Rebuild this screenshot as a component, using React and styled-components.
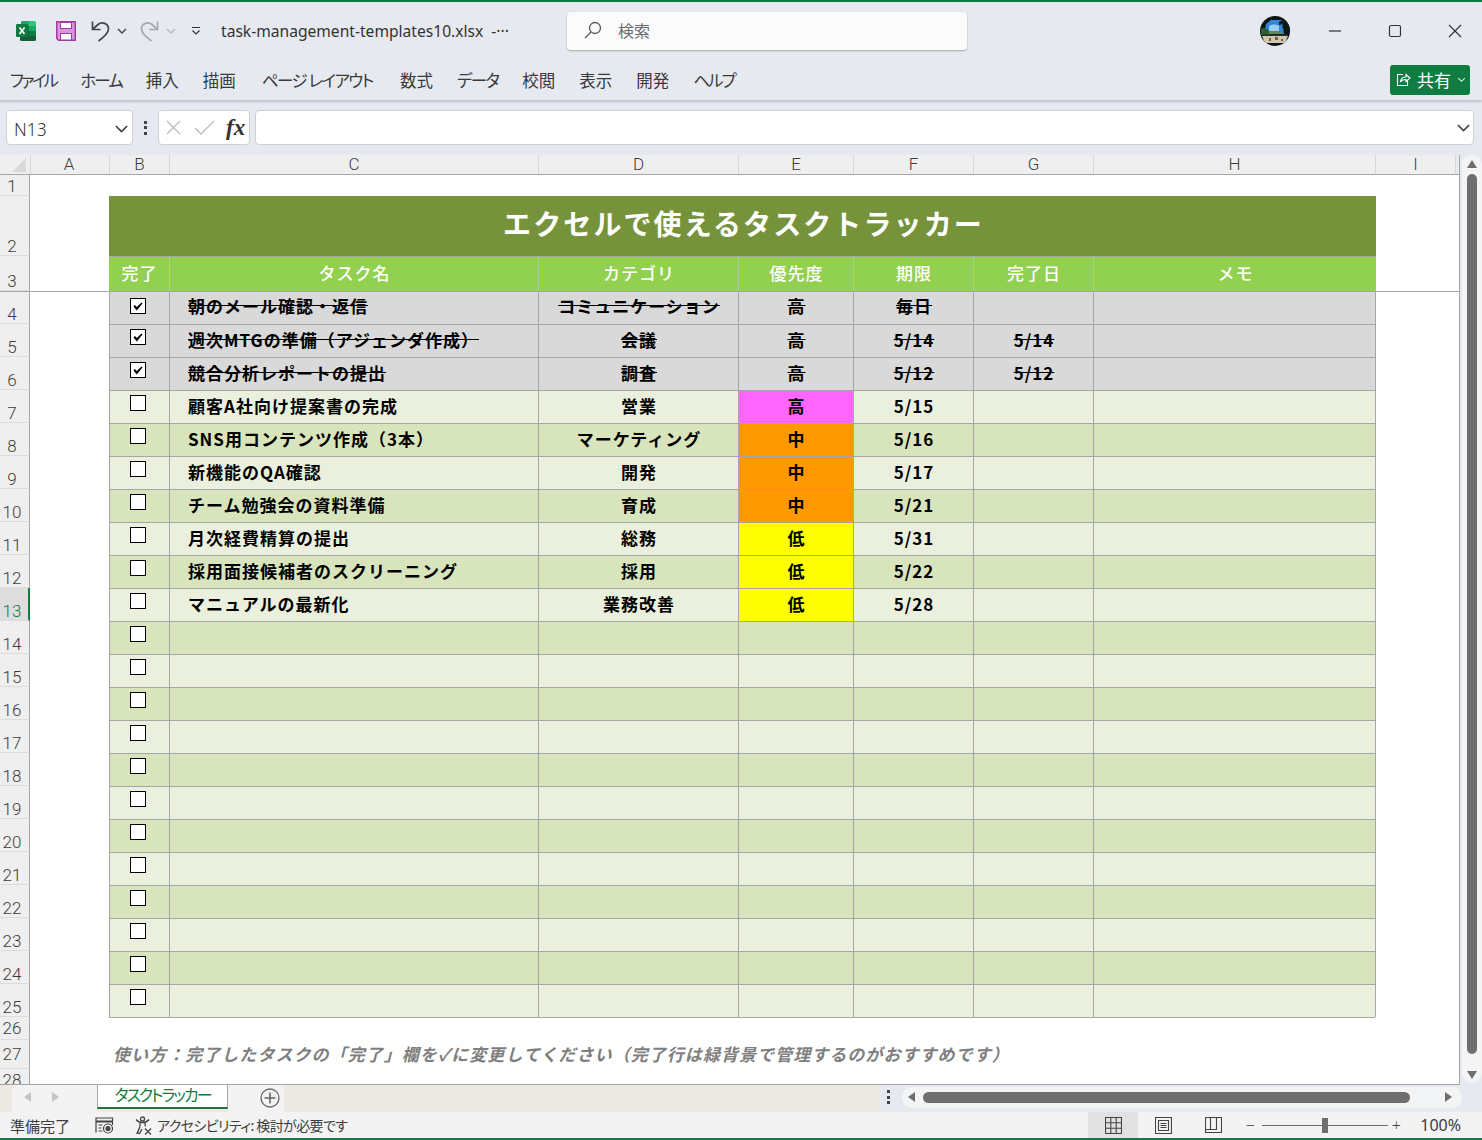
import React from 'react'
import styled, { createGlobalStyle } from 'styled-components'

const jp = `"Noto Sans CJK JP", "Noto Sans", sans-serif`
const ui = `"Noto Sans", "Noto Sans CJK JP", sans-serif`
const chrome = '#e6e9ef'
const line = '#a6a6a6'
const columns = '30px 79px 60px 369px 200px 115px 120px 120px 282px 85px'

const Global = createGlobalStyle`
    html, body {
        margin: 0;
        padding: 0;
        overflow: hidden;
    }
    * {
        box-sizing: border-box;
    }
`

const Page = styled.div`
    width: 1482px;
    height: 1140px;
    display: flex;
    flex-direction: column;
    overflow: hidden;
    background: ${chrome};
    font-family: ${jp};
    color: #333;
`

const TitleBar = styled.div`
    height: 62px;
    flex: none;
    border-top: 2px solid #107c41;
    display: flex;
    align-items: center;
    padding: 0 20px 2px 16px;
`

const QuickIcon = styled.svg`
    flex: none;
    display: block;
    margin-left: ${p => p.$gap || 0}px;
`

const FileName = styled.div`
    margin-left: 20px;
    width: 346px;
    flex: none;
    font-family: ${ui};
    font-size: 15.6px;
    color: #333;
    white-space: nowrap;
`

const SearchBox = styled.div`
    width: 400px;
    height: 38px;
    flex: none;
    background: #fbfbfb;
    border-radius: 4px;
    box-shadow: 0 1px 2px rgba(0, 0, 0, .28);
    display: flex;
    align-items: center;
    gap: 16px;
    padding: 0 0 2px 17px;
    font-size: 16px;
    color: #6b6b6b;
`

const Avatar = styled.svg`
    margin-left: auto;
    margin-right: 38px;
    border-radius: 50%;
    display: block;
    flex: none;
`

const WindowButtons = styled.div`
    display: flex;
    align-items: center;
    gap: 46px;
`

const RibbonTabs = styled.div`
    height: 38px;
    flex: none;
    display: flex;
    align-items: center;
    padding: 0 12px 2px 10px;
    gap: 24px;
    font-size: 16.5px;
    font-feature-settings: "palt";
    box-shadow: 0 2px 2px rgba(0, 0, 0, .16);
    position: relative;
    z-index: 1;
`

const RibbonTab = styled.span`
    white-space: pre;
    color: #3a3a3a;
    line-height: 1;
    letter-spacing: ${p => p.$squeeze || 0}px;
    margin: 0 ${p => p.$after || 0}px 0 ${p => p.$before || 0}px;
`

const ShareButton = styled.div`
    margin-left: auto;
    width: 80px;
    height: 30px;
    margin-top: -1px;
    background: #107c41;
    border-radius: 3px;
    color: #fff;
    display: flex;
    align-items: center;
    gap: 6px;
    padding: 0 0 1px 6px;
    font-size: 17px;
`

const FormulaBar = styled.div`
    height: 55px;
    flex: none;
    display: flex;
    align-items: center;
    padding: 0 8px 0 6px;
`

const FieldBox = styled.div`
    height: 35px;
    background: #fff;
    border: 1px solid #cfcfcf;
    border-radius: 4px;
    display: flex;
    align-items: center;
`

const NameBox = styled(FieldBox)`
    width: 127px;
    justify-content: space-between;
    padding: 2px 3px 0 7px;
    font-family: ${ui};
    font-weight: 300;
    font-size: 17.5px;
    color: #333;
`

const Dots = styled.div`
    width: 25px;
    display: flex;
    flex-direction: column;
    align-items: center;
    gap: 2.5px;

    i {
        width: 3px;
        height: 3px;
        background: #444;
    }
`

const FxBox = styled(FieldBox)`
    width: 92px;
    padding-left: 7px;
    gap: 13px;
`

const FxLabel = styled.span`
    font-family: "Liberation Serif", serif;
    font-style: italic;
    font-weight: 700;
    font-size: 23px;
    color: #333;
    margin-left: -2px;
`

const FormulaInput = styled(FieldBox)`
    flex: 1;
    margin-left: 5px;
    justify-content: flex-end;
    padding-right: 2px;
`

const Sheet = styled.div`
    height: 930px;
    flex: none;
    display: flex;
`

const SheetMain = styled.div`
    width: 1460px;
    flex: none;
    overflow: hidden;
    border-right: 1px solid ${line};
    border-bottom: 1px solid ${line};
    background: #fff;
`

const ColumnHeads = styled.div`
    display: grid;
    grid-template-columns: ${columns};
    height: 20px;
    border-bottom: 1px solid ${line};
    background: ${chrome};
`

const Corner = styled.div`
    background: #efefef;
    position: relative;

    &::after {
        content: '';
        position: absolute;
        right: 4px;
        bottom: 2px;
        border-style: solid;
        border-width: 0 0 14px 14px;
        border-color: transparent transparent #d9d9d9 transparent;
    }
`

const ColumnHead = styled.div`
    background: #efefef;
    border-left: 1px solid #d6d6d6;
    ${p => p.$last && 'border-right: 1px solid #d6d6d6;'}
    display: flex;
    align-items: center;
    justify-content: center;
    padding-right: ${p => p.$first ? 2 : 0}px;
    font-family: Roboto, sans-serif;
    font-weight: 300;
    font-size: 17px;
    color: #3c3c3c;
    line-height: 1;
    width: ${p => p.$last ? '81px' : '100%'};
`

const SheetRow = styled.div`
    display: grid;
    grid-template-columns: ${columns};
    height: ${p => p.$h || 33}px;
    ${p => p.$freeze && `border-top: 1px solid ${line};`}
`

const RowHead = styled.div`
    background: ${p => p.$active ? '#dedede' : '#efefef'};
    border-right: ${p => p.$active ? '2px solid #107c41' : `1px solid ${line}`};
    border-bottom: 1px solid #dcdcdc;
    display: flex;
    align-items: ${p => p.$mid ? 'center' : 'flex-end'};
    justify-content: center;
    padding: 0 ${p => p.$active ? 4 : 5}px 0 0;
    font-family: Roboto, sans-serif;
    font-weight: 300;
    font-size: 17px;
    line-height: 18px;
    color: ${p => p.$active ? '#107c41' : '#3c3c3c'};
`

const Blank = styled.div`
    ${p => p.$edge && `border-left: 1px solid ${line};`}
    ${p => p.$span && `grid-column: ${p.$span}; border-top: 1px solid ${line};`}
`

const Title = styled.div`
    grid-column: 3 / 10;
    margin-right: -1px;
    background: #76933c;
    color: #fff;
    display: flex;
    align-items: center;
    justify-content: center;
    padding: 0 0 6px 2px;
    font-size: 28px;
    font-weight: 700;
    letter-spacing: 2.1px;
    line-height: 1;
`

const HeadCell = styled.div`
    background: #92d050;
    border-top: 1px solid ${line};
    border-left: 1px solid #b1c9a0;
    color: #fff;
    display: flex;
    align-items: center;
    justify-content: center;
    padding: 0 0 4px 1px;
    font-size: 17px;
    font-weight: 500;
    letter-spacing: 1px;

    &:nth-child(3) {
        border-left: 0;
    }
    &:last-child {
        margin-right: -1px;
    }
`

const Cell = styled.div`
    background: ${p => p.$bg};
    border-top: 1px solid ${line};
    border-left: 1px solid ${line};
    display: flex;
    align-items: center;
    justify-content: ${p => p.$left ? 'flex-start' : 'center'};
    padding: 0 0 4px ${p => p.$left ? 18 : 1}px;
    font-size: 17px;
    font-weight: 700;
    letter-spacing: 1px;
    color: #000;
    white-space: nowrap;
    text-decoration: ${p => p.$done ? 'line-through' : 'none'};

    ${SheetRow}[data-freeze] & {
        border-top: 0;
        padding-bottom: 5px;
    }
`

const CheckCell = styled(Cell)`
    align-items: flex-start;
    justify-content: flex-start;
    padding: ${p => p.$top}px 0 0 20px;

    ${SheetRow}[data-freeze] & {
        padding-bottom: 0;
    }
`

const Checkbox = styled.div`
    width: 16px;
    height: 16px;
    background: #fff;
    border: 1.4px solid #000;
    display: flex;
    align-items: center;
    justify-content: center;
`

const Note = styled.div`
    grid-column: 3 / 10;
    padding: 0 0 3px 4px;
    display: flex;
    align-items: center;
    font-size: 17px;
    font-weight: 700;
    font-style: italic;
    letter-spacing: 1.05px;
    color: #7f7f7f;
    white-space: nowrap;
`

const VScroll = styled.div`
    flex: 1;
    margin: 0 0 2px 2px;
    background: #f4f4f4;
    border-radius: 10px;
    display: flex;
    flex-direction: column;
    align-items: center;
    padding: 5px 0 4px;
`

const Arrow = styled.div`
    flex: none;
    width: 0;
    height: 0;
    border-style: solid;
    border-color: transparent;
    ${p => p.$dir === 'up' && `border-width: 0 5px 8px; border-bottom-color: ${p.$c || '#6e6e6e'};`}
    ${p => p.$dir === 'down' && `border-width: 8px 5px 0; border-top-color: ${p.$c || '#6e6e6e'};`}
    ${p => p.$dir === 'left' && `border-width: 5px 7px 5px 0; border-right-color: ${p.$c || '#6e6e6e'};`}
    ${p => p.$dir === 'right' && `border-width: 5px 0 5px 7px; border-left-color: ${p.$c || '#6e6e6e'};`}
`

const VThumb = styled.div`
    width: 10px;
    height: 881px;
    margin: 6px 0 17px;
    background: #6e6e6e;
    border-radius: 5px;
`

const TabRow = styled.div`
    height: 27px;
    flex: none;
    display: flex;
    align-items: stretch;
    background: #ece8e2;
`

const TabNav = styled.div`
    width: 85px;
    margin-left: 12px;
    background: #f3f3f3;
    display: flex;
    align-items: center;
    gap: 21px;
    padding: 0 0 3px 12px;
`

const SheetTab = styled.div`
    width: 131px;
    height: 24px;
    background: #fff;
    border-left: 1px solid ${line};
    border-right: 1px solid ${line};
    border-bottom: 2px solid #217346;
    display: flex;
    align-items: center;
    justify-content: center;
    padding-bottom: 5px;
    font-size: 16px;
    font-feature-settings: "palt";
    letter-spacing: -2px;
    color: #107c41;
`

const TabTail = styled.div`
    width: 56px;
    background: #f3f3f3;
    display: flex;
    align-items: center;
    padding: 0 0 1px 32px;
`

const TabFill = styled.div`
    width: 596px;
`

const TabTools = styled.div`
    flex: 1;
    display: flex;
    align-items: center;
    padding: 0 20px 3px 0;
    background: ${chrome};
`

const ToolDots = styled(Dots)`
    width: 16px;
    flex: none;
    margin-right: 6px;
`

const HScroll = styled.div`
    flex: 1;
    height: 21px;
    background: #f3f4f6;
    border-radius: 10px;
    display: flex;
    align-items: center;
    padding: 0 10px 0 6px;
`

const HThumb = styled.div`
    width: 487px;
    height: 11px;
    margin: 0 auto 0 8px;
    background: #6e6e6e;
    border-radius: 6px;
`

const StatusBar = styled.div`
    height: 28px;
    flex: none;
    display: flex;
    align-items: center;
    background: #f3f3f3;
    border-bottom: 2px solid #107c41;
    padding-left: 10px;
    font-size: 14.5px;
    color: #3c3c3c;
`

const StatusText = styled.span`
    white-space: pre;
    font-feature-settings: "palt";
    margin-left: ${p => p.$gap || 0}px;
    font-size: ${p => p.$size || 14}px;
    letter-spacing: ${p => p.$squeeze || 0}px;
`

const StatusIcon = styled.svg`
    display: block;
    flex: none;
    margin-left: ${p => p.$gap || 0}px;
`

const ViewButtons = styled.div`
    margin-left: auto;
    height: 100%;
    display: flex;
`

const ViewButton = styled.div`
    width: 50px;
    display: flex;
    align-items: center;
    justify-content: center;
    background: ${p => p.$on ? '#e1e1e1' : 'transparent'};
`

const Zoom = styled.div`
    display: flex;
    align-items: center;
    padding: 0 21px 0 4px;
    font-family: ${ui};
`

const ZoomSign = styled.span`
    font-size: 16px;
    width: 16px;
    text-align: center;
    color: #444;
    font-weight: 300;
    margin-right: ${p => p.$gap || 0}px;
`

const ZoomTrack = styled.div`
    width: 126px;
    height: 1px;
    background: #6e6e6e;
    position: relative;

    &::after {
        content: '';
        position: absolute;
        left: 60px;
        top: -7px;
        width: 6px;
        height: 15px;
        background: #6e6e6e;
    }
`

const ZoomValue = styled.span`
    margin-left: 16px;
    font-size: 16px;
    color: #3c3c3c;
`

const Chevron = ({ size = 12, color = '#444' }) => (
    <svg width={size} height={size} viewBox="0 0 12 12" fill="none" stroke={color} strokeWidth="1.4">
        <path d="M1.5 4l4.5 4.5L10.5 4" />
    </svg>
)

const ExcelIcon = () => (
    <QuickIcon width="20" height="20" viewBox="0 0 20 20">
        <path d="M6 0h12.5A1.5 1.5 0 0 1 20 1.5V5h-7V0z" fill="#33c481" />
        <path d="M5 1a1 1 0 0 1 1-1h7v5H5z" fill="#21a366" />
        <rect x="4" y="5" width="9" height="5" fill="#107c41" />
        <rect x="13" y="5" width="7" height="5" fill="#21a366" />
        <rect x="4" y="10" width="9" height="5" fill="#185c37" />
        <rect x="13" y="10" width="7" height="5" fill="#107c41" />
        <path d="M4 15h16v3.5a1.5 1.5 0 0 1-1.5 1.5H5.5A1.5 1.5 0 0 1 4 18.5z" fill="#185c37" />
        <rect x="0" y="3" width="12" height="13" rx="1" fill="#0f7b40" />
        <path d="M3.5 6.5l5 6.5M8.5 6.5l-5 6.5" stroke="#fff" strokeWidth="1.7" />
    </QuickIcon>
)

const SaveIcon = () => (
    <QuickIcon $gap={20} width="20" height="20" viewBox="0 0 20 20">
        <path d="M.75.75h18.5v18.5H2.5L.75 17.5z" fill="#dc97dc" stroke="#a33aa3" strokeWidth="1.5" />
        <rect x="4.5" y="1.5" width="11" height="6" fill="#fff" stroke="#a33aa3" />
        <rect x="4.5" y="12.5" width="11" height="6.5" fill="#fff" stroke="#a33aa3" />
    </QuickIcon>
)

const UndoIcon = ({ color, gap, flip }) => (
    <QuickIcon $gap={gap} width="20" height="22" viewBox="0 0 20 22" fill="none" stroke={color} strokeWidth="1.7"
        style={flip ? { transform: 'scaleX(-1)' } : undefined}>
        <path d="M2.5 1.5V9.5H10.5" />
        <path d="M2.5 9.5L8 4.5C11.5 1.5 18.5 3 18.5 9C18.5 13 14 17 8.5 21" />
    </QuickIcon>
)

const SmallCaret = ({ color, gap }) => (
    <QuickIcon $gap={gap} width="10" height="8" viewBox="0 0 10 8" fill="none" stroke={color} strokeWidth="1.4">
        <path d="M1 2l4 4 4-4" />
    </QuickIcon>
)

const CustomizeIcon = () => (
    <QuickIcon $gap={15} width="10" height="10" viewBox="0 0 10 10" fill="none" stroke="#333" strokeWidth="1.2">
        <path d="M1 1.5h8M1.5 4.5L5 8l3.5-3.5" />
    </QuickIcon>
)

const SearchIcon = () => (
    <svg width="18" height="18" viewBox="0 0 18 18" fill="none" stroke="#555" strokeWidth="1.3">
        <circle cx="11" cy="7" r="5.5" />
        <path d="M7 11l-6 6" />
    </svg>
)

const AvatarIcon = () => (
    <Avatar width="30" height="30" viewBox="0 0 30 30">
        <rect width="30" height="30" fill="#0d1416" />
        <path d="M6 8l5-4h11l2 14H4z" fill="#2f86dc" />
        <path d="M9 10c3-2 7-2 10 0v5H9z" fill="#9ccbf0" />
        <path d="M1 13c3-2 6-1 8 2l1 4H1z" fill="#2c5e34" />
        <path d="M9 15h13v3H9z" fill="#5f8a58" />
        <rect x="3" y="18.5" width="25" height="1.5" fill="#263028" />
        <path d="M2 20h26l-3 7H5z" fill="#d2c6ae" />
        <path d="M9 22h2v3H9zM15 21h3v3h-3zM21 23h2v2h-2z" fill="#6a6255" />
        <path d="M19 6l5-3 6 1v12h-4l-1-7-3 3 1-4-4 1z" fill="#0d1a15" />
    </Avatar>
)

const ShareIcon = () => (
    <svg width="15" height="16" viewBox="0 0 15 16" fill="none" stroke="#fff" strokeWidth="1.1">
        <path d="M7 3.5H1.5v11h10V10" />
        <path d="M4.5 10.5C5 7.5 7 6 10 6V3.5L14 7l-4 3.5V8.5C8 8.5 6 9 4.5 10.5z" />
    </svg>
)

const FormulaX = () => (
    <svg width="15" height="15" viewBox="0 0 15 15" fill="none" stroke="#bdbdbd" strokeWidth="1.4">
        <path d="M1 1l13 13M14 1L1 14" />
    </svg>
)

const FormulaCheck = () => (
    <svg width="21" height="15" viewBox="0 0 21 15" fill="none" stroke="#bdbdbd" strokeWidth="1.4">
        <path d="M1 8l6 6L20 1" />
    </svg>
)

const CheckMark = () => (
    <svg width="10" height="9" viewBox="0 0 10 9">
        <path d="M.5 4.5L2 3l1.8 2L8.5.5 9.5 1.5 3.8 8.5z" fill="#000" />
    </svg>
)

const PlusCircle = () => (
    <svg width="20" height="20" viewBox="0 0 20 20" fill="none" stroke="#666" strokeWidth="1.3">
        <circle cx="10" cy="10" r="9" />
        <path d="M10 4.5v11M4.5 10h11" strokeWidth="1.6" />
    </svg>
)

const MacroIcon = () => (
    <StatusIcon $gap={25} width="19" height="17" viewBox="0 0 19 17" fill="none" stroke="#444" strokeWidth="1.2">
        <path d="M1 15.5V1h16.5v7" />
        <path d="M1 4.5h16.5" strokeWidth="2" />
        <path d="M3.5 8h4M3.5 11h3M3.5 14h4" />
        <circle cx="13" cy="11.5" r="4.5" />
        <circle cx="13" cy="11.5" r="2" fill="#444" />
    </StatusIcon>
)

const AccessIcon = () => (
    <StatusIcon $gap={21} width="19" height="19" viewBox="0 0 19 19" fill="none" stroke="#444" strokeWidth="1.3">
        <circle cx="7.5" cy="3" r="2" />
        <path d="M1 3.5C3 6 5 6.5 7.5 6.5S12 6 14 3.5M5 7c.5 3-.5 6-3 10l2.5.5L7 13M10 7c0 1.5.2 2.5.5 3.5" />
        <path d="M10 12.5l6 6M16 12.5l-6 6" />
    </StatusIcon>
)

const GridIcon = () => (
    <svg width="17" height="17" viewBox="0 0 17 17" fill="none" stroke="#444" strokeWidth="1.1">
        <path d="M.5.5h16v16H.5zM.5 5.8h16M.5 11.2h16M5.8.5v16M11.2.5v16" />
    </svg>
)

const PageIcon = () => (
    <svg width="17" height="17" viewBox="0 0 17 17" fill="none" stroke="#444" strokeWidth="1.1">
        <path d="M.5.5h16v16H.5z" />
        <path d="M3.5 3.5h10v10h-10zM5.5 6.5h6M5.5 8.5h6M5.5 10.5h6" />
    </svg>
)

const BreakIcon = () => (
    <svg width="17" height="17" viewBox="0 0 17 17" fill="none" stroke="#444" strokeWidth="1.1">
        <path d="M.5 15.5V.5h16v15zM.5 12.5h11V.5M5.5.5v12" />
    </svg>
)

const ribbonTabs = [
    { label: 'ファイル', squeeze: -2.7 },
    { label: 'ホーム', squeeze: -1.9 },
    { label: '挿入' },
    { label: '描画' },
    { label: 'ページ\u00a0レイアウト', squeeze: -1.5, before: 2, after: 3 },
    { label: '数式' },
    { label: 'データ', squeeze: -1.6 },
    { label: '校閲' },
    { label: '表示' },
    { label: '開発' },
    { label: 'ヘルプ', squeeze: -2 },
]
const columnLabels = ['A', 'B', 'C', 'D', 'E', 'F', 'G', 'H', 'I']
const headings = ['完了', 'タスク名', 'カテゴリ', '優先度', '期限', '完了日', 'メモ']
const priorityColors = { 高: '#ff66ff', 中: '#ff9900', 低: '#ffff00' }

const tasks = [
    { done: true, name: '朝のメール確認・返信', category: 'コミュニケーション', priority: '高', due: '毎日', end: '' },
    { done: true, name: '週次MTGの準備（アジェンダ作成）', category: '会議', priority: '高', due: '5/14', end: '5/14' },
    { done: true, name: '競合分析レポートの提出', category: '調査', priority: '高', due: '5/12', end: '5/12' },
    { name: '顧客A社向け提案書の完成', category: '営業', priority: '高', due: '5/15' },
    { name: 'SNS用コンテンツ作成（3本）', category: 'マーケティング', priority: '中', due: '5/16' },
    { name: '新機能のQA確認', category: '開発', priority: '中', due: '5/17' },
    { name: 'チーム勉強会の資料準備', category: '育成', priority: '中', due: '5/21' },
    { name: '月次経費精算の提出', category: '総務', priority: '低', due: '5/31' },
    { name: '採用面接候補者のスクリーニング', category: '採用', priority: '低', due: '5/22' },
    { name: 'マニュアルの最新化', category: '業務改善', priority: '低', due: '5/28' },
]

const rows = Array.from({ length: 22 }, (_, i) => tasks[i] || {})

function TaskRow({ task, number }) {
    const { done, name, category, priority, due, end } = task
    const first = number === 4
    const bg = done ? '#d9d9d9' : number % 2 ? '#ebf0de' : '#d8e4bc'

    return (
        <SheetRow $freeze={first} data-freeze={first ? '' : undefined}>
            <RowHead $active={number === 13}>{number}</RowHead>
            <Blank />
            <CheckCell $bg={bg} $top={first ? 6 : 4}>
                <Checkbox>{done && <CheckMark />}</Checkbox>
            </CheckCell>
            <Cell $bg={bg} $left $done={done}>{name}</Cell>
            <Cell $bg={bg} $done={done}>{category}</Cell>
            <Cell $bg={done ? bg : priorityColors[priority] || bg} $done={done}>{priority}</Cell>
            <Cell $bg={bg} $done={done}>{due}</Cell>
            <Cell $bg={bg} $done={done}>{end}</Cell>
            <Cell $bg={bg} />
            <Blank $edge />
        </SheetRow>
    )
}

export default function App() {
    return (
        <Page>
            <Global />

            <TitleBar>
                <ExcelIcon />
                <SaveIcon />
                <UndoIcon color="#444" gap={14} />
                <SmallCaret color="#444" gap={7} />
                <UndoIcon color="#a8a8a8" gap={13} flip />
                <SmallCaret color="#b8b8b8" gap={6} />
                <CustomizeIcon />
                <FileName>task-management-templates10.xlsx&nbsp;&nbsp;-···</FileName>
                <SearchBox>
                    <SearchIcon />
                    検索
                </SearchBox>
                <AvatarIcon />
                <WindowButtons>
                    <svg width="14" height="14" viewBox="0 0 14 14" stroke="#333" strokeWidth="1.2"><path d="M1 7h12" /></svg>
                    <svg width="14" height="14" viewBox="0 0 14 14" fill="none" stroke="#333" strokeWidth="1.2"><rect x="1.5" y="1.5" width="11" height="11" rx="1.5" /></svg>
                    <svg width="14" height="14" viewBox="0 0 14 14" stroke="#333" strokeWidth="1.2"><path d="M1 1l12 12M13 1L1 13" /></svg>
                </WindowButtons>
            </TitleBar>

            <RibbonTabs>
                {ribbonTabs.map(tab => (
                    <RibbonTab key={tab.label} $squeeze={tab.squeeze} $before={tab.before} $after={tab.after}>{tab.label}</RibbonTab>
                ))}
                <ShareButton>
                    <ShareIcon />
                    共有
                    <Chevron size={9} color="#fff" />
                </ShareButton>
            </RibbonTabs>

            <FormulaBar>
                <NameBox>
                    N13
                    <Chevron size={15} />
                </NameBox>
                <Dots><i /><i /><i /></Dots>
                <FxBox>
                    <FormulaX />
                    <FormulaCheck />
                    <FxLabel>fx</FxLabel>
                </FxBox>
                <FormulaInput>
                    <Chevron size={15} />
                </FormulaInput>
            </FormulaBar>

            <Sheet>
                <SheetMain>
                    <ColumnHeads>
                        <Corner />
                        {columnLabels.map(label => (
                            <ColumnHead key={label} $first={label === 'A'} $last={label === 'I'}>{label}</ColumnHead>
                        ))}
                    </ColumnHeads>

                    <SheetRow $h={21}>
                        <RowHead>1</RowHead>
                    </SheetRow>
                    <SheetRow $h={60}>
                        <RowHead>2</RowHead>
                        <Blank />
                        <Title>エクセルで使えるタスクトラッカー</Title>
                    </SheetRow>
                    <SheetRow $h={35}>
                        <RowHead>3</RowHead>
                        <Blank />
                        {headings.map(text => <HeadCell key={text}>{text}</HeadCell>)}
                    </SheetRow>

                    {rows.map((task, i) => <TaskRow key={i} task={task} number={i + 4} />)}

                    <SheetRow $h={23}>
                        <RowHead $mid>26</RowHead>
                        <Blank />
                        <Blank $span="3 / 10" />
                    </SheetRow>
                    <SheetRow $h={29}>
                        <RowHead $mid>27</RowHead>
                        <Blank />
                        <Note>使い方：完了したタスクの「完了」欄を✓に変更してください（完了行は緑背景で管理するのがおすすめです）</Note>
                    </SheetRow>
                    <SheetRow $h={21}>
                        <RowHead>28</RowHead>
                    </SheetRow>
                </SheetMain>

                <VScroll>
                    <Arrow $dir="up" />
                    <VThumb />
                    <Arrow $dir="down" />
                </VScroll>
            </Sheet>

            <TabRow>
                <TabNav>
                    <Arrow $dir="left" $c="#c4c4c4" />
                    <Arrow $dir="right" $c="#c4c4c4" />
                </TabNav>
                <SheetTab>タスクトラッカー</SheetTab>
                <TabTail><PlusCircle /></TabTail>
                <TabFill />
                <TabTools>
                    <ToolDots><i /><i /><i /></ToolDots>
                    <HScroll>
                        <Arrow $dir="left" />
                        <HThumb />
                        <Arrow $dir="right" />
                    </HScroll>
                </TabTools>
            </TabRow>

            <StatusBar>
                <StatusText $size={15}>準備完了</StatusText>
                <MacroIcon />
                <AccessIcon />
                <StatusText $gap={3} $squeeze={-0.6}>アクセシビリティ:&nbsp;検討が必要です</StatusText>
                <ViewButtons>
                    <ViewButton $on><GridIcon /></ViewButton>
                    <ViewButton><PageIcon /></ViewButton>
                    <ViewButton><BreakIcon /></ViewButton>
                </ViewButtons>
                <Zoom>
                    <ZoomSign $gap={4}>−</ZoomSign>
                    <ZoomTrack />
                    <ZoomSign>+</ZoomSign>
                    <ZoomValue>100%</ZoomValue>
                </Zoom>
            </StatusBar>
        </Page>
    )
}
